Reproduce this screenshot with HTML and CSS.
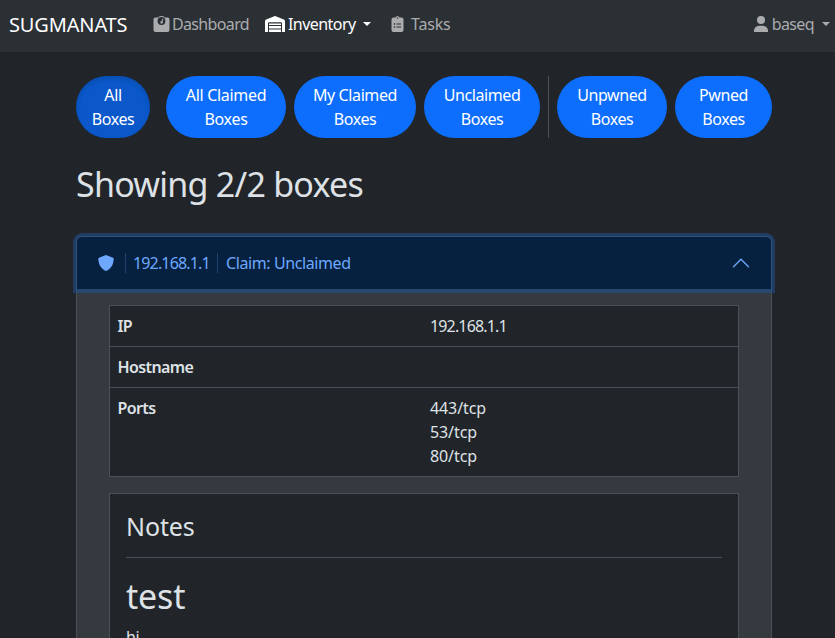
FILE: index.html
```html
<!DOCTYPE html>
<html lang="en">
<head>
<meta charset="utf-8">
<title>SUGMANATS</title>
<link rel="stylesheet" href="styles.css">
</head>
<body>
<nav class="navbar">
  <a class="brand">SUGMANATS</a>
  <a class="link dashboard"><svg width="17" height="16" viewBox="0 0 17 16"><path fill-rule="evenodd" d="M2.500 1.500H5A5 5 0 0 1 12 1.500h2.500a2 2 0 0 1 2 2V14a2 2 0 0 1-2 2h-12a2 2 0 0 1-2-2V3.500a2 2 0 0 1 2-2zM8.500 1.100a3.900 3.900 0 1 0 0 7.800 3.900 3.900 0 0 0 0-7.800z"/><path d="M9.500 2.600 10.400 3 9.600 5.500A1.300 1.300 0 1 1 8.600 5z"/></svg><span>Dashboard</span></a>
  <a class="link inventory"><svg width="20" height="16" viewBox="0 0 20 16"><path d="M0 16V5.200c0-.8.5-1.500 1.200-1.800L9.300.2a2 2 0 0 1 1.400 0l8.100 3.200c.7.300 1.200 1 1.200 1.800V16h-3V7.200a1 1 0 0 0-1-1H4a1 1 0 0 0-1 1V16zM4 7.500h12V9H4zM4 10h12v2.500H4zM4 13.500h12V16H4z"/></svg><span>Inventory</span><i class="caret"></i></a>
  <a class="link tasks"><svg width="13" height="16" viewBox="0 0 12 16"><path fill-rule="evenodd" d="M6 0a2 2 0 0 1 1.900 1.500H10a2 2 0 0 1 2 2V14a2 2 0 0 1-2 2H2a2 2 0 0 1-2-2V3.500a2 2 0 0 1 2-2h2.100A2 2 0 0 1 6 0zm0 1.300a.7.7 0 1 0 0 1.400.7.7 0 0 0 0-1.400zM2.300 7.300v1.400h1.400V7.300zm2.700.2v1h4.500v-1zm-2.700 2.800v1.400h1.400v-1.400zm2.700.2v1h4.500v-1z"/></svg><span>Tasks</span></a>
  <a class="link user"><svg width="14" height="16" viewBox="0 0 14 16"><circle cx="7" cy="4" r="4"/><path d="M0 16v-1.200A5 5 0 0 1 5 9.700h4a5 5 0 0 1 5 5.100V16z"/></svg><span>baseq</span><i class="caret"></i></a>
</nav>
<main class="container">
  <div class="filters">
    <button class="pill all active">All<br>Boxes</button>
    <button class="pill claimed">All Claimed<br>Boxes</button>
    <button class="pill mine">My Claimed<br>Boxes</button>
    <button class="pill unclaimed">Unclaimed<br>Boxes</button>
    <div class="rule"></div>
    <button class="pill unpwned">Unpwned<br>Boxes</button>
    <button class="pill pwned">Pwned<br>Boxes</button>
  </div>
  <h1 class="title">Showing 2/2 boxes</h1>
  <section class="accordion">
    <header class="accordion-head">
      <svg class="shield" width="16" height="16" viewBox="0 0 16 16"><path d="M8 0 15 2.700c.5.200.7.600.7 1C15.500 9.500 13 14 8 16 3 14 .5 9.500.3 3.700c0-.4.200-.8.7-1z"/></svg>
      <span class="address"><span class="digits">192.168.1.1</span></span>
      <span class="claim">Claim: Unclaimed</span>
      <svg class="chevron" width="20" height="20" viewBox="0 0 16 16"><path d="m2 11 6-6 6 6"/></svg>
    </header>
    <div class="accordion-body">
      <dl class="details">
        <div class="row"><dt>IP</dt><dd class="digits">192.168.1.1</dd></div>
        <div class="row"><dt>Hostname</dt><dd></dd></div>
        <div class="row"><dt>Ports</dt><dd class="ports">443/tcp<br>53/tcp<br>80/tcp</dd></div>
      </dl>
      <article class="notes">
        <h2 class="notes-title">Notes</h2>
        <h1 class="note-heading">test</h1>
        <p class="note-text">hi</p>
      </article>
    </div>
  </section>
</main>
</body>
</html>
```
FILE: styles.css
```css
* { box-sizing: border-box; }
html, body { height: 100%; overflow: hidden; }
body {
  margin: 0;
  background: #212529;
  color: #dee2e6;
  font: 16px/24px "Noto Sans", sans-serif;
  letter-spacing: -.4px;
}
h1, h2, p, dl, dd { margin: 0; font-weight: 400; }
svg { flex: none; fill: currentColor; }
.navbar {
  display: flex;
  align-items: center;
  height: 52px;
  padding: 0 5px 4px 9px;
  background: #2b3035;
  color: #aaacae;
  white-space: nowrap;
}
.brand { width: 144px; padding-top: 1px; color: #fff; font-size: 20px; line-height: 30px; letter-spacing: -.15px; }
.link { display: flex; align-items: center; }
.dashboard { width: 112px; gap: 2px; letter-spacing: -.65px; }
.inventory { width: 126px; gap: 3px; color: #fff; letter-spacing: -.55px; }
.tasks { gap: 7px; letter-spacing: -.2px; }
.user { gap: 4px; margin-left: auto; letter-spacing: -.6px; }
.caret { margin-left: 4px; border: 4.8px solid transparent; border-top-color: currentColor; border-bottom: 0; }
.user .caret { margin-left: 4px; }
.container { width: 696px; margin-left: 76px; }
.filters { display: flex; gap: 8px; height: 86px; padding-top: 24px; }
.pill {
  height: 62px;
  padding: 0;
  border: 0;
  border-radius: 31px;
  background: #0d6efd;
  color: #fff;
  font: inherit;
  letter-spacing: inherit;
  white-space: nowrap;
}
.active { background: #0a58ca; box-shadow: inset 0 3px 5px rgba(0, 0, 0, .125); }
.all { width: 74px; margin-right: 8px; }
.claimed { width: 120px; letter-spacing: -.3px; }
.mine { width: 122px; }
.unclaimed { width: 116px; }
.rule { width: 1px; height: 62px; background: #4d5154; }
.unpwned { width: 110px; }
.pwned { width: 97px; }
.title { margin-top: 24px; font-size: 34px; line-height: 44px; letter-spacing: -.75px; }
.accordion { height: 432px; margin-top: 30px; border: 1px solid #495057; border-bottom: 0; border-radius: 6px 6px 0 0; background: #343a40; }
.accordion-head {
  display: flex;
  align-items: center;
  height: 52px;
  padding: 0 20px 0 21px;
  border-radius: 5px 5px 0 0;
  background: #05213f;
  box-shadow: 0 0 0 4px rgba(31, 83, 155, .5);
  color: #6ea8fe;
}
.address, .claim { height: 20px; border-left: 1px solid #1d426e; line-height: 20px; }
.address { width: 92px; margin-left: 11px; padding-left: 7px; }
.digits { letter-spacing: -.85px; }
.claim { padding-left: 8px; }
.chevron { margin-left: auto; fill: none; stroke: currentColor; stroke-linecap: round; }
.accordion-body { height: 379px; padding: 16px 32px 0; overflow: hidden; }
.details { border: 1px solid #495057; background: #212529; }
.row { display: grid; grid-template-columns: 312.5px 1fr; padding: 8px 8px 8px 7.5px; }
.row + .row { border-top: 1px solid #495057; }
dt { font-weight: 600; letter-spacing: -.6px; }
.ports { letter-spacing: -.1px; }
.notes { height: 200px; margin-top: 16px; padding: 16px 16px 0; border: 1px solid #495057; border-bottom: 0; background: #212529; }
.notes-title { padding-bottom: 15px; border-bottom: 1px solid #495057; font-size: 25px; line-height: 32px; letter-spacing: -.1px; }
.note-heading { margin-top: 16px; font-size: 34px; line-height: 44px; letter-spacing: -.2px; }
.note-text { margin-top: 7px; }
```
